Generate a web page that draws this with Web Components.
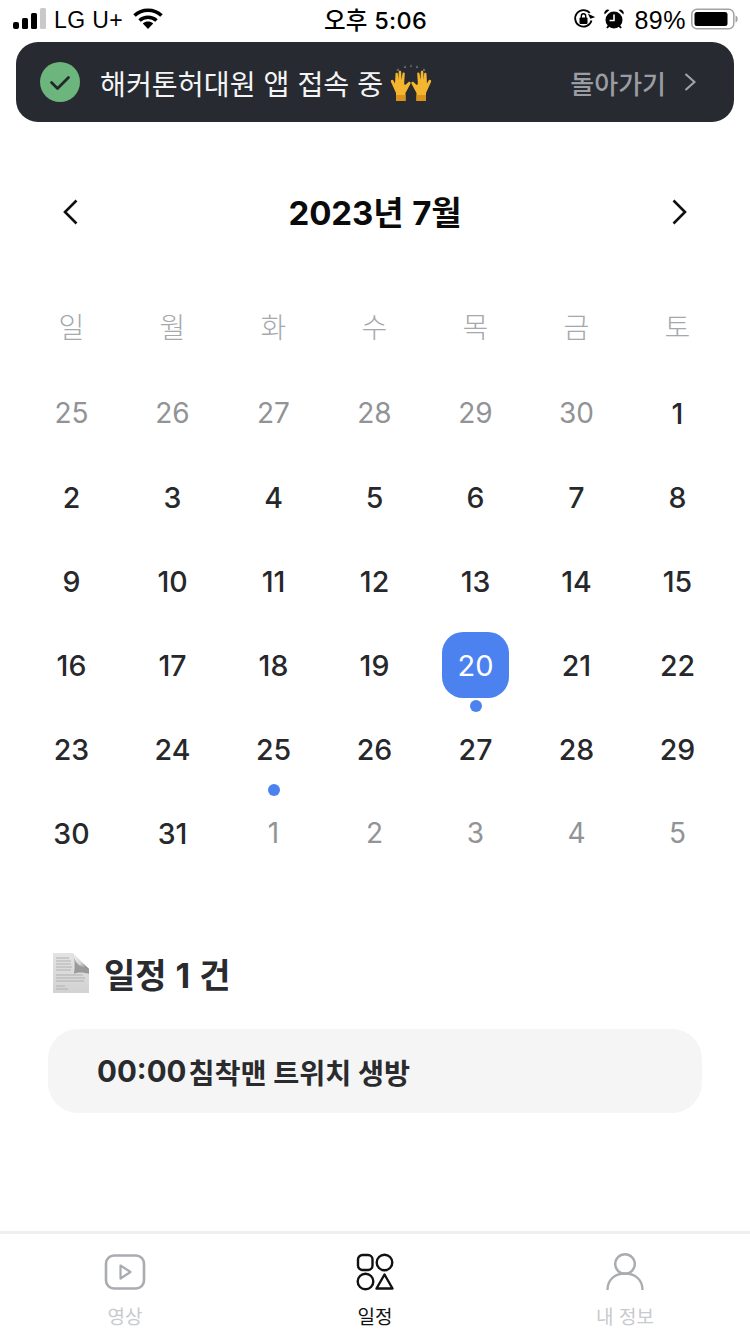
<!DOCTYPE html>
<html lang="ko">
<head>
<meta charset="utf-8">
<title>일정</title>
<style>
html, body { margin: 0; padding: 0; background: #fff; }
body { width: 750px; height: 1334px; overflow: hidden; font-family: Inter, "Noto Sans CJK KR", sans-serif; }
app-page { display: flex; flex-direction: column; height: 1334px; }
</style>
</head>
<body>
<app-page>
  <status-bar></status-bar>
  <notice-banner></notice-banner>
  <month-calendar year="2023" month="7" selected="20" marks="20,25"></month-calendar>
  <schedule-list></schedule-list>
  <tab-bar></tab-bar>
</app-page>
<script>
class AppPage extends HTMLElement {
    constructor() {
        super();
        this.attachShadow({ mode: "open" });
        this.shadowRoot.innerHTML = `
            <style>
            :host { display: flex; flex-direction: column; height: 1334px; }
            ::slotted(tab-bar) { margin-top: auto; }
            </style>
            <slot></slot>
        `;
    }
}

class StatusBar extends HTMLElement {
    constructor() {
        super();
        this.attachShadow({ mode: "open" });
        this.shadowRoot.innerHTML = `
            <style>
            :host { display: grid; grid-template-columns: 1fr auto 1fr; align-items: center; height: 38px; padding: 0 12px 4px 13px; font-family: Inter, "Noto Sans CJK KR", sans-serif; color: #000; }
            .left, .right { display: flex; align-items: center; }
            .right { justify-content: flex-end; }
            .carrier { font-size: 23px; margin: 0 10px 0 8px; padding-top: 2px; font-family: "Liberation Sans", sans-serif; letter-spacing: .4px; }
            .time { font-size: 23.500px; font-weight: 500; letter-spacing: .3px; }
            .pct { font-size: 25px; margin: 0 5px 0 9px; padding-top: 2px; font-family: "Liberation Sans", sans-serif; letter-spacing: .5px; }
            svg { display: block; }
            .alarm { margin-left: 8px; }
            </style>
            <div class="left">
                <svg width="33" height="22" viewBox="0 0 33 22">
                    <rect x="0" y="14" width="6" height="7" rx="2" fill="#000"/>
                    <rect x="9" y="10" width="6" height="11" rx="1.500" fill="#000"/>
                    <rect x="18" y="5" width="6" height="16" rx="1.500" fill="#000"/>
                    <rect x="27" y="0" width="6" height="21" rx="1.500" fill="#c9c9c9"/>
                </svg>
                <span class="carrier">LG U+</span>
                <svg width="30" height="22" viewBox="0 0 30 22">
                    <path d="M1.500 7.500C9 .5 21 .5 28.500 7.500" fill="none" stroke="#000" stroke-width="3.600"/>
                    <path d="M6.500 12.500c4.800-4.300 12.200-4.300 17 0" fill="none" stroke="#000" stroke-width="3.600"/>
                    <path d="M15 21l-5.200-5.600c3-2.500 7.400-2.500 10.400 0z" fill="#000"/>
                </svg>
            </div>
            <span class="time">오후 5:06</span>
            <div class="right">
                <svg width="22" height="22" viewBox="0 0 22 22">
                    <path d="M18.500 12.500A8.300 8.300 0 1 1 16.800 5" fill="none" stroke="#000" stroke-width="1.800"/>
                    <path d="M14.500 9.500l5.500 0.500 1-5z" fill="#000" transform="rotate(60 18 8)"/>
                    <rect x="6.500" y="9.500" width="8" height="6.500" rx="1" fill="#000"/>
                    <path d="M8.300 10V8a2.200 2.200 0 0 1 4.400 0v2" fill="none" stroke="#000" stroke-width="1.400"/>
                </svg>
                <svg class="alarm" width="22" height="22" viewBox="0 0 22 22">
                    <circle cx="11" cy="12" r="8.500" fill="#000"/>
                    <path d="M1.500 6.500a3.600 3.600 0 0 1 5-4.500zM20.500 6.500a3.600 3.600 0 0 0-5-4.500z" fill="#000"/>
                    <path d="M4 20l2-2.500M18 20l-2-2.500" stroke="#000" stroke-width="2"/>
                    <path d="M11 6.500V12.500H6.500" fill="none" stroke="#fff" stroke-width="1.600"/>
                </svg>
                <span class="pct">89%</span>
                <svg width="47" height="22" viewBox="0 0 47 22">
                    <rect x=".8" y="1.300" width="42" height="19.400" rx="5" fill="none" stroke="#a3a3a3" stroke-width="1.500"/>
                    <rect x="3.500" y="4" width="33" height="14" rx="2.500" fill="#000"/>
                    <path d="M44.500 7.500c1.500.4 2.200 1.800 2.200 3.500s-.7 3.100-2.200 3.500z" fill="#a3a3a3"/>
                </svg>
            </div>
        `;
    }
}

class NoticeBanner extends HTMLElement {
    constructor() {
        super();
        this.attachShadow({ mode: "open" });
        this.shadowRoot.innerHTML = `
            <style>
            :host { display: flex; align-items: center; height: 80px; margin: 0 16px; padding: 0 38px 0 24px; border-radius: 22px; background: #272a30; font-family: Inter, "Noto Sans CJK KR", sans-serif; }
            .msg { display: flex; align-items: center; margin-left: 20px; color: #f4f4f5; font-size: 28.200px; white-space: nowrap; }
            .hands { margin-left: 7px; display: block; }
            .back { margin-left: auto; color: #9a9da3; font-size: 26px; font-weight: 500; }
            .chev { margin-left: 18px; display: block; }
            </style>
            <svg width="40" height="40" viewBox="0 0 40 40">
                <circle cx="20" cy="20" r="20" fill="#6cb57c"/>
                <path d="M11.500 20.500l6 6 11-11" fill="none" stroke="#23272b" stroke-width="2.800" stroke-linecap="round" stroke-linejoin="round"/>
            </svg>
            <div class="msg">해커톤허대원 앱 접속 중
                <svg class="hands" width="42" height="40" viewBox="0 0 42 40">
                    <path d="M8 6l1.500 3h-3zM15 3l1.200 3h-2.400zM21 2l1 3h-2zM27 3l1.200 3h-2.400zM34 6l1.500 3h-3z" fill="#6d6f72"/>
                    <g fill="#f4b62e">
                        <path d="M6 39V31L1 20c-.8-2 1.500-3 2.600-1.200L5 21.500 5.500 12c.1-1.600 2.200-1.600 2.400 0l.3 6 .5-8c.1-1.700 2.400-1.700 2.500 0l.3 8 1-6.500c.3-1.600 2.400-1.400 2.300.3L14.200 20.500c-.1 2 .4 2.500 1.300 2.200l2.800-2.500c1.500-1.200 3.200.5 1.900 2L15.500 31 15.500 39z"/>
                        <path d="M36 39V31l5-11c.8-2-1.500-3-2.600-1.200L37 21.500 36.500 12c-.1-1.600-2.200-1.600-2.400 0l-.3 6-.5-8c-.1-1.700-2.400-1.700-2.500 0l-.3 8-1-6.500c-.3-1.600-2.400-1.400-2.300.3l.6 8.700c.1 2-.4 2.500-1.300 2.200l-2.800-2.500c-1.500-1.200-3.200.5-1.900 2L26.500 31 26.500 39z"/>
                    </g>
                    <path d="M6 33h9.500v6H6zM26.500 33H36v6h-9.500z" fill="#d9931c"/>
                </svg>
            </div>
            <span class="back">돌아가기</span>
            <svg class="chev" width="12" height="20" viewBox="0 0 12 20">
                <path d="M1.500 2l9 8-9 8" fill="none" stroke="#a4a6ab" stroke-width="2"/>
            </svg>
        `;
    }
}

class DayCell extends HTMLElement {
    constructor() {
        super();
        this.attachShadow({ mode: "open" });
        this.shadowRoot.innerHTML = `
            <style>
            :host { display: flex; flex-direction: column; align-items: center; justify-content: flex-start; height: 84px; position: relative; font-size: 28.500px; font-weight: 450; color: #27282b; }
            :host([muted]) { color: #919396; font-size: 28px; font-weight: 400; }
            :host([selected]) { font-weight: 400; font-size: 29px; }
            .num { display: flex; align-items: center; justify-content: center; width: 67px; height: 66px; margin-top: 9px; border-radius: 21px; }
            :host([selected]) .num { background: #4c82f0; color: #fff; }
            .dot { position: absolute; left: 50%; bottom: -5px; margin-left: -6px; width: 12px; height: 12px; border-radius: 50%; background: #4c82f0; display: none; }
            :host([marked]) .dot { display: block; }
            </style>
            <div class="num"><slot></slot></div>
            <div class="dot"></div>
        `;
    }
}

class MonthCalendar extends HTMLElement {
    constructor() {
        super();
        this.attachShadow({ mode: "open" });
        this.shadowRoot.innerHTML = `
            <style>
            :host { display: block; padding: 0 22px 0 21px; font-family: Inter, "Noto Sans CJK KR", sans-serif; }
            .head { display: flex; align-items: center; justify-content: space-between; height: 60px; margin-top: 60px; padding: 0 41px 0 42px; }
            .title { font-size: 33px; font-weight: 700; color: #0b0b0c; letter-spacing: -.1px; word-spacing: 1px; position: relative; top: -1px; }
            svg { display: block; }
            .grid { display: grid; grid-template-columns: repeat(7, 1fr); }
            .week { margin-top: 71px; height: 30px; margin-bottom: 28px; }
            .week span { text-align: center; font-size: 28px; line-height: 30px; color: #a6a8ab; font-weight: 300; }
            </style>
            <div class="head">
                <svg width="15" height="26" viewBox="0 0 15 26"><path d="M13.500 1.500L2 13l11.500 11.500" fill="none" stroke="#111" stroke-width="2.600"/></svg>
                <span class="title"></span>
                <svg width="15" height="26" viewBox="0 0 15 26"><path d="M1.500 1.500L13 13 1.500 24.500" fill="none" stroke="#111" stroke-width="2.600"/></svg>
            </div>
            <div class="grid week"></div>
            <div class="grid days"></div>
        `;
    }

    connectedCallback() {
        const year = Number(this.getAttribute("year"));
        const month = Number(this.getAttribute("month"));
        const selected = Number(this.getAttribute("selected"));
        const marks = (this.getAttribute("marks") || "").split(",").map(Number);
        this.shadowRoot.querySelector(".title").textContent = `${year}년 ${month}월`;

        const week = this.shadowRoot.querySelector(".week");
        ["일", "월", "화", "수", "목", "금", "토"].forEach((name) => {
            const label = document.createElement("span");
            label.textContent = name;
            week.appendChild(label);
        });

        const days = this.shadowRoot.querySelector(".days");
        const start = new Date(year, month - 1, 1).getDay();
        const last = new Date(year, month, 0).getDate();
        const prevLast = new Date(year, month - 1, 0).getDate();
        const total = Math.ceil((start + last) / 7) * 7;
        for (let i = 0; i < total; i++) {
            const cell = document.createElement("day-cell");
            const day = i - start + 1;
            if (day < 1) {
                cell.textContent = prevLast + day;
                cell.setAttribute("muted", "");
            } else if (day > last) {
                cell.textContent = day - last;
                cell.setAttribute("muted", "");
            } else {
                cell.textContent = day;
                if (day === selected) cell.setAttribute("selected", "");
                if (marks.includes(day)) cell.setAttribute("marked", "");
            }
            days.appendChild(cell);
        }
    }
}

class ScheduleList extends HTMLElement {
    constructor() {
        super();
        this.attachShadow({ mode: "open" });
        this.shadowRoot.innerHTML = `
            <style>
            :host { display: block; padding: 0 48px; margin-top: 76px; font-family: Inter, "Noto Sans CJK KR", sans-serif; color: #2a2b2e; }
            .title { display: flex; align-items: center; height: 44px; font-size: 34px; font-weight: 700; word-spacing: 1px; }
            .title svg { display: block; margin: 0 14px 0 4px; }
            .item { display: flex; align-items: center; height: 84px; margin-top: 34px; padding: 0 49px; border-radius: 30px; background: #f5f5f5; font-size: 28.300px; font-weight: 700; }
            .time { margin-right: 2px; font-size: 29.500px; }
            </style>
            <div class="title">
                <svg width="38" height="42" viewBox="0 0 38 42">
                    <defs>
                        <linearGradient id="sheet" x1="0" y1="0" x2="0" y2="1"><stop offset="0" stop-color="#e3e3e3"/><stop offset="1" stop-color="#d2d2d2"/></linearGradient>
                        <linearGradient id="fold" x1="0" y1="0" x2="1" y2="1"><stop offset="0" stop-color="#f2f2f2"/><stop offset=".55" stop-color="#d5d5d5"/><stop offset="1" stop-color="#6e6e6e"/></linearGradient>
                    </defs>
                    <path d="M1 1H21C24 8 27 14 37 17V41H1z" fill="url(#sheet)"/>
                    <path d="M21 1C24 8 27 14 37 17V22C32 20 24 20 22 22 23 14 23 8 21 1z" fill="#7d7d7d" opacity=".7"/>
                    <path d="M21 1L37 17C30 15 23 14 21 1z" fill="url(#fold)"/>
                    <path d="M4 6h13M4 9h15M4 12h15M4 15h16M4 18h15M4 23h27M4 26h29M4 29h28M4 34h9M4 37h12" stroke="#b0b0b0" stroke-width="1" fill="none"/>
                </svg>
                <span>일정 1 건</span>
            </div>
            <div class="item"><span class="time">00:00</span><span>침착맨 트위치 생방</span></div>
        `;
    }
}

class TabBar extends HTMLElement {
    constructor() {
        super();
        this.attachShadow({ mode: "open" });
        this.shadowRoot.innerHTML = `
            <style>
            :host { display: grid; grid-template-columns: repeat(3, 250px); height: 100px; border-top: 3px solid #eeeff0; font-family: Inter, "Noto Sans CJK KR", sans-serif; }
            .tab { display: flex; flex-direction: column; align-items: center; padding-top: 19px; font-size: 19px; color: #c8cacd; }
            .tab.on { color: #111; }
            svg { display: block; height: 38px; }
            span { margin-top: 15px; line-height: 24px; }
            </style>
            <div class="tab">
                <svg width="42" height="38" viewBox="0 0 42 38">
                    <rect x="2" y="2.500" width="38" height="33" rx="8" fill="none" stroke="#a9acb1" stroke-width="2.600"/>
                    <path d="M16.500 12.500l10 6.500-10 6.500z" fill="none" stroke="#a9acb1" stroke-width="2.200" stroke-linejoin="round"/>
                </svg>
                <span>영상</span>
            </div>
            <div class="tab on">
                <svg width="38" height="38" viewBox="0 0 38 38">
                    <rect x="2" y="2" width="14.500" height="15" rx="4.500" fill="none" stroke="#111" stroke-width="2.400"/>
                    <circle cx="28.500" cy="9.500" r="7.800" fill="none" stroke="#111" stroke-width="2.400"/>
                    <circle cx="9.500" cy="28.500" r="7.800" fill="none" stroke="#111" stroke-width="2.400"/>
                    <path d="M28.500 21.500l8 14h-16z" fill="none" stroke="#111" stroke-width="2.400" stroke-linejoin="round"/>
                </svg>
                <span>일정</span>
            </div>
            <div class="tab">
                <svg width="38" height="38" viewBox="0 0 38 38">
                    <circle cx="19" cy="11" r="9.800" fill="none" stroke="#a9acb1" stroke-width="2.400"/>
                    <path d="M1.500 37c0-10 7-16.500 17.500-16.500S36.500 27 36.500 37" fill="none" stroke="#a9acb1" stroke-width="2.400"/>
                </svg>
                <span>내 정보</span>
            </div>
        `;
    }
}

customElements.define("day-cell", DayCell);
customElements.define("status-bar", StatusBar);
customElements.define("notice-banner", NoticeBanner);
customElements.define("month-calendar", MonthCalendar);
customElements.define("schedule-list", ScheduleList);
customElements.define("tab-bar", TabBar);
customElements.define("app-page", AppPage);
</script>
</body>
</html>
